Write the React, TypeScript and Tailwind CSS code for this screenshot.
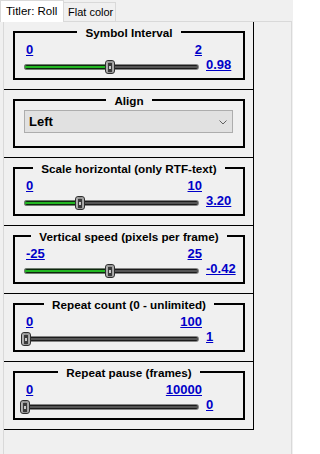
type SliderRow = {
  title: string
  min: string
  max: string
  value: string
  frac: number
}

const rows: SliderRow[] = [
  { title: 'Symbol Interval', min: '0', max: '2', value: '0.98', frac: 0.49 },
  { title: 'Scale horizontal (only RTF-text)', min: '0', max: '10', value: '3.20', frac: 0.32 },
  { title: 'Vertical speed (pixels per frame)', min: '-25', max: '25', value: '-0.42', frac: 0.4916 },
  { title: 'Repeat count (0 - unlimited)', min: '0', max: '100', value: '1', frac: 0.01 },
  { title: 'Repeat pause (frames)', min: '0', max: '10000', value: '0', frac: 0 },
]

function Group({ title, children }: { title: string; children: React.ReactNode }) {
  return (
    <div className="h-[68px] border-b border-black pt-[9px] pl-[9px] pr-[8px]">
      <div className="relative h-[49px] border-2 border-black">
        {/* legend sitting on the frame */}
        <div className="absolute -top-[7px] left-0 right-0 flex justify-center">
          <span className="bg-[#f0f0f0] px-[8px] text-[11.7px] font-bold leading-[14px] text-black whitespace-nowrap">
            {title}
          </span>
        </div>
        {children}
      </div>
    </div>
  )
}

function Track({ frac }: { frac: number }) {
  const thumbLeft = frac * 174.5 - 0.5
  const fill = frac * 174.5 + 0.5
  return (
    <div className="relative mt-[3px] h-[14px] w-[181px]">
      <div className="absolute left-[4px] top-[4px] h-[6px] w-[175px] rounded-[3px] bg-[#858585] p-[1px]">
        <div className="flex h-[4px] items-center rounded-[2px] bg-[#1c1c1c]">
          <div className="h-[2px] w-full bg-[#555555]" />
        </div>
      </div>
      {fill > 1 && (
        <div
          className="absolute left-[4px] top-[4px] h-[6px] rounded-l-[3px] bg-[#6e7d6e] p-[1px] pr-0"
          style={{ width: fill }}
        >
          <div className="flex h-[4px] items-center rounded-l-[2px] bg-[#0f260f]">
            <div className="h-[2px] w-full bg-[#22b822]" />
          </div>
        </div>
      )}
      <div
        className="absolute top-0 flex h-[14px] w-[10px] items-center justify-center rounded-[3px] border border-[#2e2e2e] bg-gradient-to-r from-[#b8b8b8] via-[#8c8c8c] to-[#b0b0b0]"
        style={{ left: thumbLeft }}
      >
        <div className="flex h-[9px] w-[4px] items-center justify-center bg-[#3a3a3a]">
          <div className="h-[3px] w-[2px] bg-[#c9c9c9]" />
        </div>
      </div>
    </div>
  )
}

function SliderGroup({ row }: { row: SliderRow }) {
  return (
    <Group title={row.title}>
      <div className="pt-[9px] text-[13px] font-bold leading-[15px] text-[#0000c8]">
        <div className="flex w-[187px] justify-between pl-[11px]">
          <span className="underline">{row.min}</span>
          <span className="underline">{row.max}</span>
        </div>
        <div className="flex items-start">
          <div className="ml-[5px]">
            <Track frac={row.frac} />
          </div>
          <span className="ml-[5px] underline">{row.value}</span>
        </div>
      </div>
    </Group>
  )
}

export default function App() {
  return (
    <div className="h-[454px] w-[293px] overflow-hidden bg-[#f0f0f0] font-['Liberation_Sans',Arial,sans-serif] text-black">
      {/* tabs */}
      <div className="relative z-10 flex h-[21px] items-end">
        <div className="-mb-[1px] flex h-[22px] w-[64px] items-center whitespace-nowrap border border-b-0 border-[#d9d9d9] bg-white pl-[5px] text-[11.5px] leading-none">
          Titler: Roll
        </div>
        <div className="flex h-[19px] w-[52px] items-center whitespace-nowrap border border-b-0 border-l-0 border-[#d9d9d9] bg-[#f0f0f0] pl-[4px] text-[11px] leading-none">
          Flat color
        </div>
      </div>

      {/* tab page */}
      <div className="ml-[3px] h-[440px] w-[289px] border border-[#d9d9d9]">
        <div className="w-[250px] border-r border-black">
          <SliderGroup row={rows[0]} />
          <Group title="Align">
            <div className="pl-[9px] pr-[10px] pt-[9px]">
              <div className="flex h-[23px] items-center justify-between border border-[#adadad] bg-[#e1e1e1] pl-[4px] pr-[5px]">
                <span className="text-[13px] font-bold leading-none">Left</span>
                <svg width="8" height="5" viewBox="0 0 8 5" className="mt-[1px]">
                  <polyline points="0.5,0.5 4,4 7.5,0.5" fill="none" stroke="#606060" strokeWidth="1" />
                </svg>
              </div>
            </div>
          </Group>
          {rows.slice(1).map((r) => (
            <SliderGroup key={r.title} row={r} />
          ))}
        </div>
      </div>
    </div>
  )
}
